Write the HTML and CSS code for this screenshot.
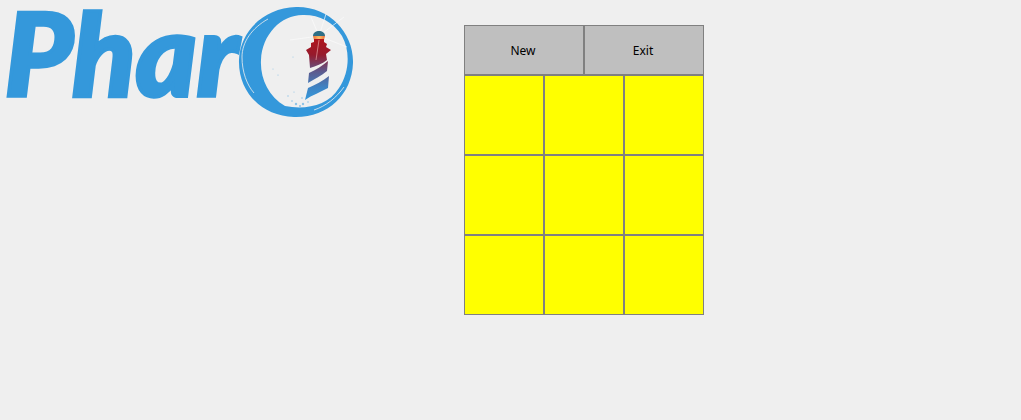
FILE: index.html
```html
<!DOCTYPE html>
<html lang="en">
<head>
<meta charset="utf-8">
<title>Pharo</title>
<link rel="stylesheet" href="styles.css">
</head>
<body>
<div class="app">
  <svg class="logo" width="360" height="125" viewBox="0 0 360 125" role="img" aria-label="Pharo">
    <defs>
      <linearGradient id="tower" x1="0" y1="37" x2="0" y2="100" gradientUnits="userSpaceOnUse">
        <stop offset="0" stop-color="#b3141c"/>
        <stop offset="0.28" stop-color="#961a2c"/>
        <stop offset="0.55" stop-color="#5d5a8e"/>
        <stop offset="0.8" stop-color="#3f84c4"/>
        <stop offset="1" stop-color="#3498db"/>
      </linearGradient>
      <radialGradient id="glow" cx="319" cy="38" r="6" gradientUnits="userSpaceOnUse">
        <stop offset="0" stop-color="#ffc46a"/>
        <stop offset="1" stop-color="#e8703a"/>
      </radialGradient>
    </defs>
    <text class="logo-text" x="4.500" y="96" textLength="234" lengthAdjust="spacingAndGlyphs">Phar</text>
    <path class="ring" fill-rule="evenodd" d="M296 7C329 6 354 33 353 63C352 95 327 118 294 117C262 116 238 92 239 60C240 31 264 8 296 7ZM304 15C282 14 262 34 261 60C260 78 268 96 285 106C305 110 328 106 339 88C350 72 350 50 342 36C333 22 320 15 304 15Z"/>
    <path class="gap" d="M268 19C252 28 242 42 242 57C242 72 247 85 254 93"/>
    <path class="gap" d="M344 87C336 98 326 106 314 110"/>
    <g class="rays">
      <path d="M319 36L311 17M319 36L326 14M319 36L344 17M319 36L347 47M319 36L290 40"/>
    </g>
    <path class="dome" d="M313 36C313 32.500 316 31 319 31C322 31 325 32.500 325 36Z"/>
    <path fill="url(#glow)" d="M313 36H325L324 40H314Z"/>
    <path fill="url(#tower)" d="M314 39H324L324 42L327 44L326 47L331 50L326 54L327 60C322 64 316 66 310 68L309 55L306 50L311 47L311 43L314 42Z"/>
    <path fill="url(#tower)" d="M328 61L327 71C321 76 314 79 308 83L309 73C316 70 322 66 328 61Z"/>
    <path fill="url(#tower)" d="M329 76L328 88C321 92 312 95 305 100L308 88C315 85 323 81 329 76Z"/>
    <path class="beam" d="M319 40L316 60"/>
    <g class="dots">
      <circle cx="296" cy="104" r="1.200"/><circle cx="300" cy="106" r="1"/><circle cx="302" cy="98" r="0.800"/>
      <circle cx="292" cy="101" r="0.800"/><circle cx="303" cy="104" r="1.200"/><circle cx="288" cy="96" r="0.700"/>
      <circle cx="294" cy="92" r="0.600"/><circle cx="278" cy="75" r="0.600"/><circle cx="273" cy="69" r="0.500"/>
      <circle cx="293" cy="57" r="0.500"/><circle cx="308" cy="102" r="0.800"/>
    </g>
  </svg>
  <div class="board">
    <button class="action">New</button>
    <button class="action">Exit</button>
    <div class="cell"></div><div class="cell"></div><div class="cell"></div>
    <div class="cell"></div><div class="cell"></div><div class="cell"></div>
    <div class="cell"></div><div class="cell"></div><div class="cell"></div>
  </div>
</div>
</body>
</html>
```
FILE: styles.css
```css
html, body {
  margin: 0;
  height: 100%;
  background: #efefef;
}

.app {
  display: flex;
  align-items: flex-start;
}

.logo {
  flex: none;
  display: block;
  overflow: visible;
}

.logo-text {
  font-family: "Lato", "Open Sans", sans-serif;
  font-weight: 900;
  font-style: italic;
  font-size: 114px;
  fill: #3498db;
  stroke: #3498db;
  stroke-width: 3.500px;
}

.ring { fill: #3498db; }

.gap {
  fill: none;
  stroke: #efefef;
  stroke-width: 0.8px;
}

.rays path {
  fill: none;
  stroke: #fbfbfb;
  stroke-width: 0.7px;
}

.dome { fill: #2f6f86; }

.beam {
  fill: none;
  stroke: #e6a0a0;
  stroke-width: 0.7px;
}

.dots { fill: #8fc3e6; }

.board {
  flex: none;
  display: grid;
  grid-template-columns: repeat(6, 40px);
  grid-template-rows: 50px repeat(3, 80px);
  margin: 25px 0 0 104px;
}

.action,
.cell {
  box-sizing: border-box;
  border: 1px solid #808080;
  border-radius: 0;
}

.action {
  grid-column: span 3;
  margin: 0;
  padding: 0 2px 0 0;
  background: #bfbfbf;
  color: #000;
  font-family: "Noto Sans", sans-serif;
  font-size: 12px;
}

.cell {
  grid-column: span 2;
  background: #ffff00;
}
```
